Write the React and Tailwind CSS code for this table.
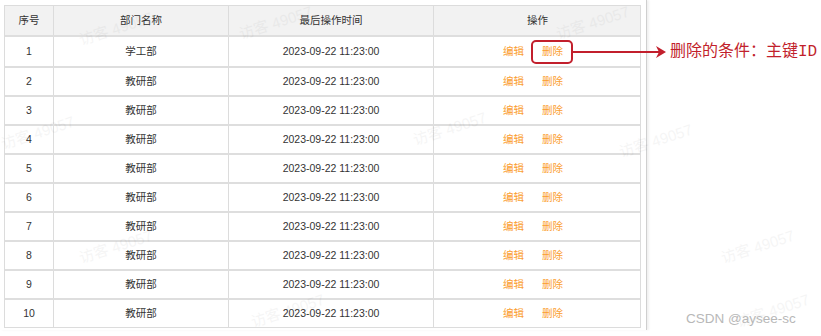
import React from 'react';

const rows = Array.from({ length: 10 }, (_, i) => ({
  id: i + 1,
  name: i === 0 ? '学工部' : '教研部',
  time: '2023-09-22 11:23:00',
}));

const cjk = { fontFamily: '"Liberation Sans", "Noto Sans CJK SC", sans-serif' };

const marks = [
  { x: 78, y: 18 }, { x: 555, y: 12 }, { x: 238, y: 12 }, { x: 0, y: 122 },
  { x: 412, y: 118 }, { x: 618, y: 130 }, { x: 78, y: 236 }, { x: 720, y: 236 },
  { x: 735, y: 300 }, { x: 250, y: 300 },
];

export default function App() {
  return (
    <div className="relative w-[821px] h-[336px] bg-white overflow-hidden text-[10.5px] text-[#333]" style={cjk}>
      {/* panel */}
      <div className="w-[647px] h-[330px] pt-[5px] pl-[4px] pr-[5px] border-r border-[#cfcfcf] shadow-[2px_0_2px_rgba(0,0,0,0.06)]">
        <div className="border border-[#dcdcdc]">
          <div className="grid grid-cols-[49px_175px_205px_207px] h-[31px] bg-[#f2f2f2] border-b-2 border-[#dedede]">
            <div className="flex items-center justify-center border-r border-[#dcdcdc]">序号</div>
            <div className="flex items-center justify-center border-r border-[#dcdcdc]">部门名称</div>
            <div className="flex items-center justify-center border-r border-[#dcdcdc]">最后操作时间</div>
            <div className="flex items-center justify-center">操作</div>
          </div>
          {rows.map((r, i) => (
            <div
              key={r.id}
              className={`grid grid-cols-[49px_175px_205px_207px] h-[29px] ${i > 0 ? 'border-t-2 border-[#dedede]' : ''}`}
            >
              <div className="flex items-center justify-center border-r border-[#dcdcdc]">{r.id}</div>
              <div className="flex items-center justify-center border-r border-[#dcdcdc]">{r.name}</div>
              <div className="flex items-center justify-center border-r border-[#dcdcdc]">{r.time}</div>
              <div className="flex items-center justify-center gap-[18px] pr-[9px] text-[#fb9d2e]">
                <span>编辑</span>
                <span>删除</span>
              </div>
            </div>
          ))}
        </div>
      </div>

      {/* watermarks */}
      {marks.map((m, i) => (
        <span
          key={i}
          className="absolute text-[15px] text-[#000] opacity-[0.035] -rotate-[18deg] pointer-events-none whitespace-nowrap"
          style={{ left: m.x, top: m.y }}
        >
          访客 49057
        </span>
      ))}

      {/* annotation */}
      <div className="absolute left-[531px] top-[40px] w-[42px] h-[24px] border-2 border-[#c21f2c] rounded-[5px]" />
      <div className="absolute left-[573px] top-[51px] w-[86px] h-[2px] bg-[#c21f2c]" />
      <svg className="absolute left-[656px] top-[46px]" width="10" height="12" viewBox="0 0 10 12">
        <path d="M0 0 L10 6 L0 12 L3 6 Z" fill="#c21f2c" />
      </svg>
      <div
        className="absolute left-[670px] top-[41px] text-[16px] leading-[22px] text-[#c21f2c] whitespace-nowrap"
        style={{ fontFamily: '"Liberation Mono", "Noto Sans CJK SC", monospace' }}
      >
        删除的条件：主键ID
      </div>

      <div className="absolute left-[686px] top-[309px] text-[13.5px] text-[#b8b8b8]" style={{ fontFamily: '"Liberation Sans", sans-serif' }}>
        CSDN @aysee-sc
      </div>
    </div>
  );
}
